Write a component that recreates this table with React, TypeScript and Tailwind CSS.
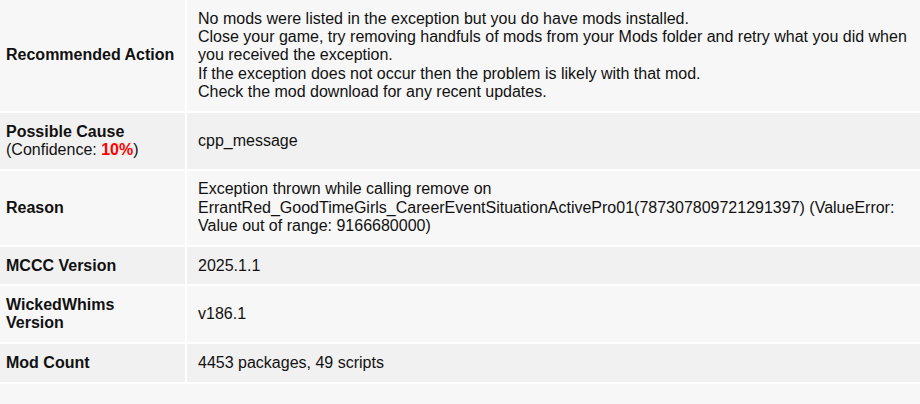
import React from "react";

type Row = { label: React.ReactNode; value: React.ReactNode };

const rows: Row[] = [
  {
    label: <b>Recommended Action</b>,
    value: (
      <>
        No mods were listed in the exception but you do have mods installed.
        <br />
        Close your game, try removing handfuls of mods from your Mods folder and retry what you did when you
        received the exception.
        <br />
        If the exception does not occur then the problem is likely with that mod.
        <br />
        Check the mod download for any recent updates.
      </>
    ),
  },
  {
    label: (
      <>
        <b>Possible Cause</b>
        <br />
        (Confidence: <b className="text-[#ff0000]">10%</b>)
      </>
    ),
    value: "cpp_message",
  },
  {
    label: <b>Reason</b>,
    value:
      "Exception thrown while calling remove on ErrantRed_GoodTimeGirls_CareerEventSituationActivePro01(787307809721291397) (ValueError: Value out of range: 9166680000)",
  },
  { label: <b>MCCC Version</b>, value: "2025.1.1" },
  { label: <b>WickedWhims Version</b>, value: "v186.1" },
  { label: <b>Mod Count</b>, value: "4453 packages, 49 scripts" },
];

export default function App() {
  return (
    <div className="w-[920px] h-[404px] overflow-hidden bg-white text-[16px] text-[#111] font-['Liberation_Sans',Arial,sans-serif]">
      <div className="grid grid-cols-[185px_1fr] gap-[2px]">
        {rows.map((r, i) => {
          const bg = i % 2 === 0 ? "bg-[#f7f7f7]" : "bg-[#f1f1f1]";
          return (
            <React.Fragment key={i}>
              <div className={`${bg} flex items-center pl-[6px] pr-[10px] py-[9.5px] leading-[18.4px]`}>
                <div>{r.label}</div>
              </div>
              <div className={`${bg} flex items-center pl-[11px] pr-[11px] py-[9.5px] leading-[18.4px]`}>
                <div>{r.value}</div>
              </div>
            </React.Fragment>
          );
        })}
        <div className="col-span-2 bg-[#f7f7f7] h-[38px]" />
      </div>
    </div>
  );
}
